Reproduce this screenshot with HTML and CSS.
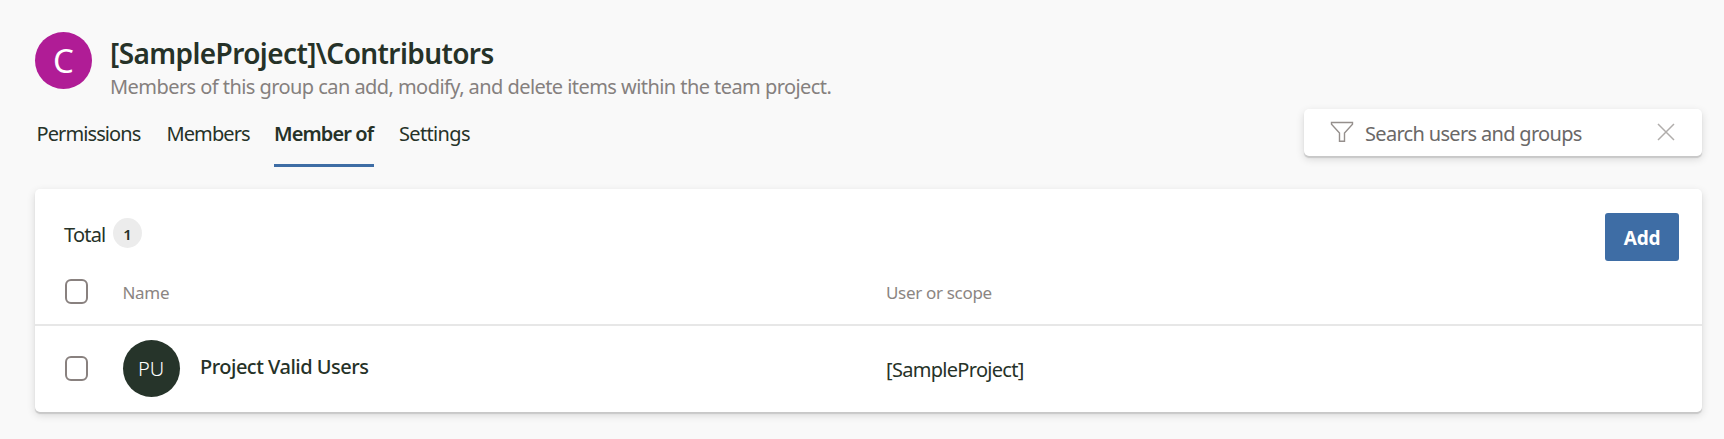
FILE: index.html
```html
<!DOCTYPE html>
<html lang="en">
<head>
<meta charset="utf-8">
<title>Contributors</title>
<link rel="stylesheet" href="styles.css">
</head>
<body>
<header class="header">
  <div class="avatar avatar-group">C</div>
  <div class="heading">
    <h1 class="title">[SampleProject]\Contributors</h1>
    <p class="description">Members of this group can add, modify, and delete items within the team project.</p>
  </div>
</header>
<div class="toolbar">
  <nav class="tabs">
    <a class="tab tab-permissions">Permissions</a>
    <a class="tab tab-members">Members</a>
    <a class="tab tab-active">Member of</a>
    <a class="tab tab-settings">Settings</a>
  </nav>
  <div class="search">
    <svg class="funnel" width="24" height="22" viewBox="0 0 24 22"><path d="M1.5 1.5h21v1.8L14.5 12v8.3h-5V12L1.5 3.3z"/></svg>
    <span class="search-text">Search users and groups</span>
    <svg class="clear" width="18" height="18" viewBox="0 0 18 18"><path d="M1 1l16 16M17 1L1 17"/></svg>
  </div>
</div>
<main class="card">
  <div class="card-top">
    <span class="total">Total</span>
    <span class="count">1</span>
    <button class="add"><span>Add</span></button>
  </div>
  <div class="row row-head">
    <span class="checkbox"></span>
    <span class="col-name">Name</span>
    <span class="col-scope">User or scope</span>
  </div>
  <div class="row row-item">
    <span class="checkbox"></span>
    <div class="identity">
      <div class="avatar avatar-user">PU</div>
      <span class="user-name">Project Valid Users</span>
    </div>
    <span class="scope">[SampleProject]</span>
  </div>
</main>
</body>
</html>
```

FILE: styles.css
```css
* { box-sizing: border-box; }
body {
  margin: 0;
  height: 439px;
  padding: 32px 22px 0 35px;
  background: #f9f9f9;
  color: #263228;
  font-family: "Noto Sans", "Open Sans", sans-serif;
  font-size: 20px;
  white-space: nowrap;
  overflow: hidden;
}
.header { display: flex; height: 77px; }
.avatar {
  display: flex;
  align-items: center;
  justify-content: center;
  flex: none;
  width: 57px;
  height: 57px;
  border-radius: 50%;
  color: #fff;
}
.avatar-group { background: #b01c96; font-size: 33px; font-weight: 400; }
.heading { padding: 2px 0 0 18px; }
.title {
  margin: 0;
  font-size: 28px;
  line-height: 38px;
  font-weight: 600;
  letter-spacing: -0.6px;
}
.description {
  margin: 0;
  line-height: 30px;
  color: #85807e;
  letter-spacing: -0.56px;
}
.toolbar { display: flex; justify-content: space-between; height: 80px; }
.tabs { display: flex; padding: 10px 0 0 1.5px; height: 58px; }
.tab { line-height: 30px; letter-spacing: -0.9px; }
.tab-permissions { width: 130px; }
.tab-members { width: 107.5px; }
.tab-active { width: 100px; font-weight: 600; border-bottom: 3px solid #3e6da5; }
.tab-settings { margin-left: 25px; letter-spacing: -0.65px; }
.search {
  display: flex;
  width: 398px;
  height: 47px;
  padding: 0 27px 0 26px;
  border-radius: 5px;
  background: #fff;
  box-shadow: 0 2px 1px #c8c8c8, 0 3px 8px rgba(0, 0, 0, .14);
}
.funnel { margin-top: 12px; fill: none; stroke: #958f8c; stroke-width: 1.4; }
.search-text { padding-left: 11px; line-height: 50px; color: #6a6867; letter-spacing: -0.68px; }
.clear { margin: 14px 0 0 auto; fill: none; stroke: #b0adab; stroke-width: 1.5; }
.card {
  height: 223px;
  border-radius: 5px;
  background: #fff;
  box-shadow: 0 2px 1px #c8c8c8, 0 3px 9px rgba(0, 0, 0, .14);
}
.card-top { display: flex; height: 75px; padding: 24px 23px 0 29px; }
.total { width: 49px; line-height: 43px; letter-spacing: -0.8px; }
.count {
  width: 29px;
  height: 30px;
  margin-top: 5px;
  border-radius: 50%;
  background: #ececec;
  text-align: center;
  font-size: 15px;
  line-height: 32px;
  font-weight: 600;
}
.add {
  width: 74px;
  height: 48px;
  margin-left: auto;
  padding: 2px 0 0;
  border: 0;
  border-radius: 3px;
  background: #3e6da5;
  color: #fff;
  font: 700 19px/46px "Noto Sans", sans-serif;
  letter-spacing: -0.2px;
}
.row {
  display: grid;
  grid-template-columns: 57.5px 763.5px 1fr;
  align-items: center;
  padding-left: 30px;
}
.row-head {
  height: 62px;
  padding-bottom: 5px;
  border-bottom: 2px solid #e7e7e7;
  color: #8b8582;
  font-size: 17px;
  letter-spacing: -0.32px;
}
.col-name, .col-scope { padding-top: 2px; }
.row-item { height: 86px; padding-bottom: 2px; }
.checkbox { width: 23px; height: 25px; border: 2px solid #89817f; border-radius: 6px; }
.identity { display: flex; }
.avatar-user { background: #26342a; font-size: 20px; font-weight: 300; }
.user-name { padding-left: 20.5px; line-height: 53px; font-weight: 500; letter-spacing: -0.5px; }
.scope { padding-top: 3px; letter-spacing: -0.7px; }
```
